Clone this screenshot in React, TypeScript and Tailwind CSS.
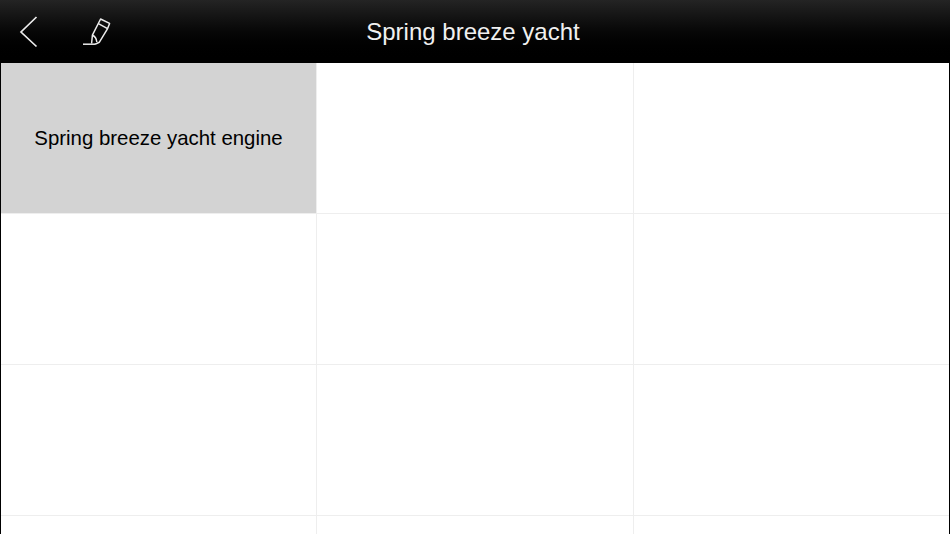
const cells = ['Spring breeze yacht engine', '', '', '', '', '', '', '', '', '', '', ''];

const App = () => {
  return (
    <div className="w-[950px] h-[534px] overflow-hidden bg-black font-['Liberation_Sans',Arial,sans-serif]">
      <div className="h-[63px] flex items-center relative bg-gradient-to-b from-[#242424] to-black">
        <div className="ml-[19px] w-5 h-8 flex items-center">
          <svg width="20" height="32" viewBox="0 0 20 32" fill="none" stroke="#ececec" strokeWidth="1.7">
            <path d="M17.5 1 L2 16 L17.5 30.5" />
          </svg>
        </div>
        <div className="ml-[43px] w-[30px] h-8 flex items-center">
          <svg width="30" height="32" viewBox="0 0 30 32" fill="none" stroke="#ececec" strokeWidth="1.5" strokeLinejoin="round">
            <path d="M1 28.2 H13" />
            <path d="M9.6 27.5 L10.4 19.2 L18.6 3 L27.6 7.4 L25.6 12.6 L17.4 26.2 L13 28.2" />
            <path d="M16.4 7.6 L25.6 12.6" />
            <path d="M10.4 19.2 C12.5 20 14.5 22.5 14.8 26" />
          </svg>
        </div>
        <div className="absolute left-0 right-0 top-0 h-[63px] flex items-center justify-center pr-[4px] text-[24px] text-[#f0f0f0]">
          Spring breeze yacht
        </div>
      </div>
      <div className="mx-px h-[471px] bg-white grid grid-cols-[316px_317px_1fr] auto-rows-[151px]">
        {cells.map((label, i) => (
          <div
            key={i}
            className={`flex items-center justify-center border-b border-[#eeeeee] ${
              i % 3 !== 2 ? 'border-r' : ''
            } ${label ? 'bg-[#d3d3d3] pt-px text-[20.4px] text-black' : ''}`}
          >
            {label}
          </div>
        ))}
      </div>
    </div>
  );
};

export default App;
